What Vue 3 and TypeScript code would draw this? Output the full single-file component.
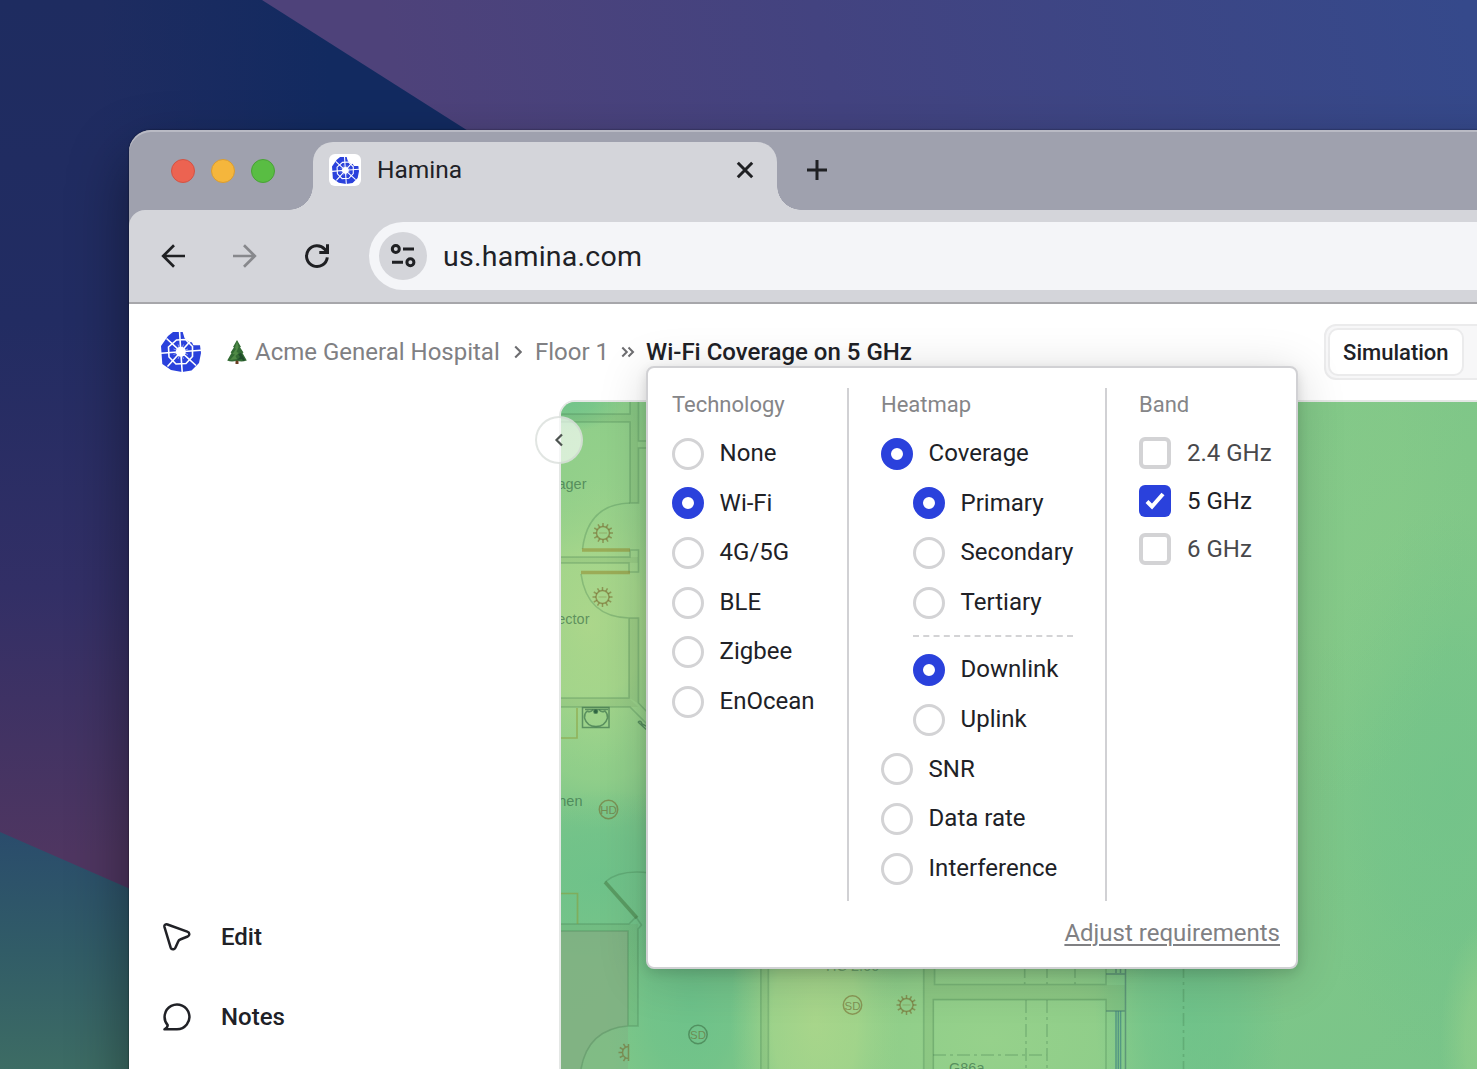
<script setup lang="ts">
interface Option {
  label: string
  checked?: boolean
  nested?: boolean
  divider?: boolean
}

const technologies: Option[] = [
  { label: 'None' },
  { label: 'Wi-Fi', checked: true },
  { label: '4G/5G' },
  { label: 'BLE' },
  { label: 'Zigbee' },
  { label: 'EnOcean' },
]

const heatmaps: Option[] = [
  { label: 'Coverage', checked: true },
  { label: 'Primary', checked: true, nested: true },
  { label: 'Secondary', nested: true },
  { label: 'Tertiary', nested: true },
  { label: '', divider: true },
  { label: 'Downlink', checked: true, nested: true },
  { label: 'Uplink', nested: true },
  { label: 'SNR' },
  { label: 'Data rate' },
  { label: 'Interference' },
]

const bands: Option[] = [
  { label: '2.4 GHz' },
  { label: '5 GHz', checked: true },
  { label: '6 GHz' },
]

// Spiky ring used for the detector symbols on the floor plan
function burst(cx: number, cy: number, from = 0, to = 12): string {
  let d = ''
  for (let i = from; i < to; i++) {
    const a = (i * Math.PI) / 6
    const c = Math.cos(a)
    const s = Math.sin(a)
    d += `M${(cx + 6.5 * c).toFixed(1)} ${(cy + 6.5 * s).toFixed(1)}L${(cx + 10 * c).toFixed(1)} ${(cy + 10 * s).toFixed(1)}`
  }
  return d
}
</script>

<template>
  <div class="desktop">
    <svg class="wallpaper" viewBox="0 0 1477 1069" preserveAspectRatio="none">
      <defs>
        <linearGradient id="navy" x1="0" y1="0" x2="0" y2="1">
          <stop offset="0" stop-color="#1e2c60" />
          <stop offset=".3" stop-color="#222c62" />
          <stop offset=".55" stop-color="#322f66" />
          <stop offset=".8" stop-color="#4f3661" />
        </linearGradient>
        <linearGradient id="deep" gradientUnits="userSpaceOnUse" x1="100" y1="0" x2="330" y2="0">
          <stop offset="0" stop-color="#122a60" stop-opacity="0" />
          <stop offset="1" stop-color="#122a60" />
        </linearGradient>
        <linearGradient id="violet" gradientUnits="userSpaceOnUse" x1="420" y1="180" x2="1450" y2="-60">
          <stop offset="0" stop-color="#4e427a" />
          <stop offset=".4" stop-color="#434380" />
          <stop offset="1" stop-color="#35498b" />
        </linearGradient>
        <linearGradient id="teal" x1="0" y1="0" x2="0" y2="1">
          <stop offset="0" stop-color="#2a4c6c" />
          <stop offset=".5" stop-color="#315c67" />
          <stop offset="1" stop-color="#3d6c64" />
        </linearGradient>
      </defs>
      <rect width="1477" height="1069" fill="url(#navy)" />
      <rect x="100" width="500" height="180" fill="url(#deep)" />
      <path d="M262 0H1477V200H577Z" fill="url(#violet)" />
      <path d="M0 832L160 902V1069H0Z" fill="url(#teal)" />
    </svg>

    <svg class="defs" width="0" height="0">
      <symbol id="logo" viewBox="0 0 40 40">
        <path fill="#2a41dc" d="M12 0H21.7L23.5 6L26 8.5L31 10.5L32.3 13.3H39L40 21L38 31L30.5 38.5L21 40L10 38L1.3 32L0 14L7 4Z" />
        <g fill="none" stroke="#fff" stroke-width="1.6">
          <path d="M15.500 8L24.500 7.500L31.500 14.500L31.500 24.500L25 31.500L15 32L8 25L7.500 15Z" />
          <path d="M19.800 19.700L18.600 0M19.800 19.700L5.500 6.500M19.800 19.700L0 21.300M19.800 19.700L6.500 34.500M19.800 19.700L21.200 40M19.800 19.700L35 33.500M19.800 19.700L40 18.200M19.800 19.700L30 8.500" />
        </g>
        <circle cx="19.800" cy="19.700" r="5" fill="#fff" />
        <path fill="none" stroke="#fff" stroke-width="1" d="M17 12.500L22.500 27M22.500 12.500L17 27M12.500 17L27 22.500M12.500 22.500L27 17" opacity=".5" />
        <path fill="#fff" d="M22.500 0L27 0L40 12H33L31 9.500L26.500 8.300L24 5.500Z" />
      </symbol>
    </svg>

    <div class="window">
      <div class="tabbar">
        <div class="lights">
          <i class="light red"></i><i class="light yellow"></i><i class="light green"></i>
        </div>
        <div class="tab">
          <div class="favicon"><svg width="27" height="27"><use href="#logo" /></svg></div>
          <span class="tab-title">Hamina</span>
          <svg class="close" width="20" height="20" viewBox="0 0 20 20"><path d="M2.800 2.800L17.200 17.200M17.200 2.800L2.800 17.200" stroke="#1f2023" stroke-width="3" /></svg>
        </div>
        <svg class="plus" width="20" height="20" viewBox="0 0 20 20"><path d="M10 0V20M0 10H20" stroke="#1f2023" stroke-width="3" /></svg>
      </div>

      <div class="toolbar">
        <svg class="nav back" width="26" height="26" viewBox="0 0 26 26"><path d="M25 13H3.500M14 2.200L3.200 13L14 23.800" fill="none" stroke="#1f2023" stroke-width="2.700" /></svg>
        <svg class="nav forward" width="26" height="26" viewBox="0 0 26 26"><path d="M1 13H22.500M12 2.200L22.800 13L12 23.800" fill="none" stroke="#87888c" stroke-width="2.700" /></svg>
        <svg class="nav reload" width="26" height="26" viewBox="0 0 26 26"><path d="M23.300 14.300A10.400 10.400 0 1 1 20.800 6.300L23 9" fill="none" stroke="#1f2023" stroke-width="3" /><path d="M22 1.200H25V11H15.300V8H22Z" fill="#1f2023" /></svg>
        <div class="address">
          <div class="site">
            <svg width="28" height="28" viewBox="0 0 28 28"><g fill="none" stroke="#1f2023" stroke-width="3"><circle cx="6.800" cy="7" r="3.500" /><circle cx="21.400" cy="20.300" r="3.500" /><path d="M14 7H25M3 20.300H14" /></g></svg>
          </div>
          <span class="url">us.hamina.com</span>
        </div>
      </div>

      <div class="page">
        <header class="header">
          <svg class="brand" width="40" height="40"><use href="#logo" /></svg>
          <nav class="crumbs">
            <svg class="tree" width="20" height="24" viewBox="0 0 20 24">
              <path d="M8.500 19H11.500V24H8.500Z" fill="#6b3d22" />
              <path d="M10 0L14 7L13 7.200L16.500 12.500L15.500 13L19.800 20.500Q14 22.500 10 20.500Q5 22.500 .2 20.500L4.500 13L3.600 12.500L7 7.200L6 7Z" fill="#336b34" />
              <path d="M10 1L8 8L9 9L5.500 14L8 14.500L3 20L10 19L8.500 16L12 13L9.500 12L11.500 7Z" fill="#4f8a46" />
              <path d="M11 14L13 17L10 20L15 19L16 21L18 20L14 13Z" fill="#204c2b" />
            </svg>
            <span class="crumb hospital">Acme General Hospital</span>
            <svg class="sep" width="8" height="14" viewBox="0 0 8 14"><path d="M1.200 1.500L6.700 7L1.200 12.500" fill="none" stroke="#6d6d70" stroke-width="2.100" /></svg>
            <span class="crumb floor">Floor 1</span>
            <svg class="dsep" width="14" height="12" viewBox="0 0 14 12"><path d="M1.300 1.500L5.800 6L1.300 10.500M7.500 1.500L12 6L7.500 10.500" fill="none" stroke="#6d6d70" stroke-width="2" /></svg>
            <span class="current">Wi-Fi Coverage on 5 GHz</span>
          </nav>
          <div class="segmented"><div class="segment">Simulation</div></div>
        </header>

        <div class="body">
          <aside class="sidebar">
            <div class="tool">
              <svg width="28" height="28" viewBox="0 0 28 28"><path d="M1.500 4.100L7.700 24.700Q8.500 26.800 10.700 26.200Q12 25.900 12.500 24.600L15.200 18.400Q15.800 17 17.200 16.500L24.600 13.500Q26.400 12.700 26.300 11Q26.200 9.300 24.200 8.600L4.500 1.500Q2.500 .9 1.700 2.200Q1.200 3 1.500 4.100Z" fill="none" stroke="#202126" stroke-width="2.500" stroke-linejoin="round" /></svg>
              <span>Edit</span>
            </div>
            <div class="tool">
              <svg width="28" height="28" viewBox="0 0 28 28"><path d="M1.500 26.300H14A12.400 12.400 0 1 0 4.700 22.100Q4.700 24.600 1.500 26.300Z" fill="none" stroke="#202126" stroke-width="2.500" stroke-linejoin="round" /></svg>
              <span>Notes</span>
            </div>
          </aside>

          <main class="map">
            <svg class="plan" width="916" height="667" viewBox="561 402 916 667">
              <defs>
                <linearGradient id="field" x1="0" y1="0" x2="1" y2="1">
                  <stop offset="0" stop-color="#84ca88" />
                  <stop offset=".3" stop-color="#7cc588" />
                  <stop offset=".65" stop-color="#82c888" />
                  <stop offset="1" stop-color="#79c489" />
                </linearGradient>
                <radialGradient id="lime"><stop offset="0" stop-color="#b0d88b" /><stop offset=".5" stop-color="#aad78b" stop-opacity=".85" /><stop offset="1" stop-color="#9bd28b" stop-opacity="0" /></radialGradient>
                <radialGradient id="mint"><stop offset="0" stop-color="#6bc18a" /><stop offset=".5" stop-color="#6bc18a" stop-opacity=".7" /><stop offset="1" stop-color="#6bc18a" stop-opacity="0" /></radialGradient>
                <radialGradient id="fresh"><stop offset="0" stop-color="#96d18b" /><stop offset=".5" stop-color="#94d08a" stop-opacity=".8" /><stop offset="1" stop-color="#90cf8a" stop-opacity="0" /></radialGradient>
              </defs>
              <rect x="561" y="402" width="916" height="667" fill="url(#field)" />
              <ellipse cx="605" cy="500" rx="120" ry="150" fill="url(#fresh)" />
              <ellipse cx="600" cy="730" rx="120" ry="100" fill="url(#fresh)" />
              <ellipse cx="565" cy="400" rx="60" ry="32" fill="url(#mint)" opacity=".8" />
              <ellipse cx="590" cy="625" rx="110" ry="145" fill="url(#lime)" opacity=".9" />
              <ellipse cx="600" cy="880" rx="150" ry="90" fill="url(#mint)" opacity=".8" />
              <ellipse cx="690" cy="1000" rx="85" ry="150" fill="url(#mint)" opacity=".9" />
              <ellipse cx="990" cy="1040" rx="230" ry="140" fill="url(#fresh)" />
              <ellipse cx="815" cy="1020" rx="85" ry="170" fill="url(#lime)" opacity=".8" />
              <ellipse cx="1190" cy="1010" rx="95" ry="180" fill="url(#mint)" opacity=".8" />
              <ellipse cx="1450" cy="790" rx="150" ry="280" fill="url(#mint)" opacity=".55" />
              <ellipse cx="1330" cy="480" rx="140" ry="320" fill="url(#fresh)" opacity=".25" />
              <ellipse cx="1490" cy="1040" rx="50" ry="120" fill="url(#fresh)" opacity=".7" />

              <path d="M561 931H628V1026Q590 1030 581 1069H561Z" fill="#82ac82" opacity=".75" />
              <path d="M628 1026V1069H581Q590 1030 628 1026Z" fill="#82ac82" opacity=".4" />
              <path d="M630 402H638V503H630ZM561 414H630V422H561ZM561 557H638V563H561ZM629 618H638V703L629 698ZM561 698H629L638 707H561ZM561 924H638V1026H628V931H561ZM761 969H768V1069H761ZM924 969H934V985H1125V1011H1106V1000H934V1069H924Z" fill="#668f55" opacity=".13" />

              <g fill="none" stroke="#3e7a4c" stroke-opacity=".3" stroke-width="1.600">
                <path d="M561 414H630V402M561 422H630V503H638.500V448H650M638.500 402V441H650" />
                <path d="M630 503Q588 504 582.500 549M561 557H630V550H638.500V572H629V563H561" />
                <path d="M581 574Q587 617 629 618V698H561M629 618H638.500V703L650 715M561 707H630L650 727" />
                <path d="M605 882Q620 869 650 873M561 924H629L636 917L641.500 925L638 929V1026H628V931H561M628 1026Q588 1029 581 1069" />
                <path d="M760.800 965V1069M768.400 965V1069M923.700 965V1069M934.600 965V984.500H1106V965M933.300 1069V999.600H1106V1069" />
                <path stroke-dasharray="13 4 3 4" d="M1024.700 965V984M1047 965V984M1075 965V984M1026 1000V1069M1047 1000V1069M933 1055H1047M1183.500 965V1069" />
              </g>
              <g fill="none" stroke="#8a9c38" stroke-opacity=".55" stroke-width="1.700">
                <path d="M561 738H577V708M561 893.500H577.500V924" />
                <path d="M605 882L637 918" stroke="#477c43" stroke-width="3.600" />
                <path d="M582 550H630M581 572.500H630" stroke="#928b2e" stroke-width="3.600" />
              </g>
              <g fill="none" stroke="#3a7e80" stroke-opacity=".65" stroke-width="1.500">
                <path d="M1106 974H1125.500M1106 1011H1125.500V965M1125.500 1011V1069M1116 965V973M1120.500 965V973" stroke="#4c7d6f" />
                <path d="M1116 1011V1069M1118.300 1011V1069M1120.600 1011V1069" />
              </g>
              <g fill="none" stroke="#2f6542" stroke-opacity=".6" stroke-width="1.500">
                <path d="M582.500 707.500H609V727.500H582.500ZM585 709.500H608" />
                <path d="M587 711Q584 714 584.500 718Q587 726.500 596 726.500Q605 726.500 607.500 718Q608 714 605 711Q601 713 599 709.500M593 709.500Q591 713 587 711" /><circle cx="595.700" cy="711.500" r="1.800" fill="#2f6542" />
                <path d="M638 722L648 731M638 722Q641 720 642 724L648 727" />
              </g>
              <g fill="none" stroke="#755f24" stroke-opacity=".52" stroke-width="1.500">
                <circle cx="603" cy="533" r="6.500" /><path :d="burst(603, 533)" /><path d="M599 533H607" opacity=".4" />
                <circle cx="602.500" cy="597" r="6.500" /><path :d="burst(602.5, 597)" /><path d="M598.500 597H606.500" opacity=".4" />
                <circle cx="906.500" cy="1005" r="6.500" /><path :d="burst(906.5, 1005)" /><path d="M902.500 1005H910.500" opacity=".4" />
                <path d="M628.500 1044V1061M628.500 1046.500A6 6 0 0 0 628.500 1058.500" /><path :d="burst(628.5, 1052.5, 4, 9)" />
                <circle cx="608.500" cy="809.500" r="9.200" />
                <circle cx="852.500" cy="1005" r="9.200" />
                <circle cx="698" cy="1034.500" r="9.200" stroke="#35633a" />
              </g>
              <g class="plan-text">
                <text x="586.500" y="489" text-anchor="end">ager</text>
                <text x="589.500" y="623.500" text-anchor="end">ector</text>
                <text x="582.500" y="806" text-anchor="end">hen</text>
                <text x="949" y="1073">G86a</text>
                <text x="826" y="971" opacity=".7">HC 2.60</text>
                <text class="tag" x="608.500" y="814" text-anchor="middle">HD</text>
                <text class="tag" x="852.500" y="1009.500" text-anchor="middle">SD</text>
                <text class="tag" x="698" y="1039" text-anchor="middle">SD</text>
              </g>
            </svg>
            <button class="collapse" aria-label="Collapse">
              <svg width="10" height="14" viewBox="0 0 10 14"><path d="M8 1.500L2.500 7L8 12.500" fill="none" stroke="#4d5450" stroke-width="2.200" /></svg>
            </button>
          </main>
        </div>

        <section class="popover">
          <div class="columns">
            <div class="column technology">
              <h3>Technology</h3>
              <label v-for="o in technologies" :key="o.label" class="option">
                <i class="radio" :class="{ on: o.checked }"></i><span>{{ o.label }}</span>
              </label>
            </div>
            <div class="column heatmap">
              <h3>Heatmap</h3>
              <template v-for="o in heatmaps" :key="o.label">
                <svg v-if="o.divider" class="rule" width="160" height="2"><path d="M0 1H160" stroke="#d3d3d5" stroke-width="2" stroke-dasharray="6 4.270" /></svg>
                <label v-else class="option" :class="{ nested: o.nested }">
                  <i class="radio" :class="{ on: o.checked }"></i><span>{{ o.label }}</span>
                </label>
              </template>
            </div>
            <div class="column band">
              <h3>Band</h3>
              <label v-for="o in bands" :key="o.label" class="check-row" :class="{ active: o.checked }">
                <i class="check" :class="{ on: o.checked }">
                  <svg v-if="o.checked" width="20" height="20" viewBox="0 0 20 20"><path d="M2 10.500L7 15.500L18 3" fill="none" stroke="#fff" stroke-width="4" /></svg>
                </i><span>{{ o.label }}</span>
              </label>
            </div>
          </div>
          <a class="adjust">Adjust requirements</a>
        </section>
      </div>
    </div>
  </div>
</template>

<style>
body {
  overflow: hidden;
}
</style>

<style scoped>
.desktop {
  position: relative;
  box-sizing: border-box;
  width: 1477px;
  height: 1069px;
  padding: 130px 0 0 129px;
  overflow: hidden;
  font-family: Roboto, "Liberation Sans", sans-serif;
  font-size: 24px;
  color: #202126;
}
.desktop *, .desktop *::before, .desktop *::after { box-sizing: border-box; }
.desktop svg { display: block; flex: none; }
.wallpaper { position: absolute; inset: 0; width: 100%; height: 100%; }
.desktop .defs { position: absolute; }
.window {
  position: relative;
  width: 1500px;
  height: 1000px;
  border-radius: 22px 0 0 0;
  background: #9fa1ae;
  box-shadow: 0 0 2px rgba(0, 0, 0, .6), 0 26px 60px rgba(0, 0, 0, .42);
}
.tabbar {
  display: flex;
  height: 80px;
  padding-left: 42px;
  border-radius: 22px 0 0 0;
  box-shadow: inset 0 2px 0 #b9bac4;
}
.lights { display: flex; gap: 16px; margin-top: 29px; }
.light { width: 24px; height: 24px; border-radius: 50%; border: 1px solid; }
.red { background: #ec6351; border-color: #d25344; }
.yellow { background: #f5b63c; border-color: #d99c31; }
.green { background: #59bd43; border-color: #49a236; }
.tab {
  position: relative;
  display: flex;
  align-items: center;
  width: 464px;
  height: 68px;
  margin: 12px 0 0 38px;
  padding: 0 22px 12px 16px;
  border-radius: 20px 20px 0 0;
  background: #d4d5da;
}
.tab::before, .tab::after {
  content: "";
  position: absolute;
  bottom: 0;
  width: 24px;
  height: 24px;
}
.tab::before { right: 100%; background: radial-gradient(circle at 0 0, transparent 23.5px, #d4d5da 24px); }
.tab::after { left: 100%; background: radial-gradient(circle at 100% 0, transparent 23.5px, #d4d5da 24px); }
.favicon {
  display: flex;
  align-items: center;
  justify-content: center;
  width: 32px;
  height: 32px;
  border-radius: 6px;
  background: #fff;
}
.tab-title { flex: 1; margin: 0 0 2px 16px; font-size: 24.500px; }
.plus { margin: 30px 0 0 30px; }
.toolbar {
  display: flex;
  align-items: center;
  height: 94px;
  border-bottom: 2px solid #a7a7ab;
  border-radius: 16px 0 0 0;
  background: #d4d5da;
}
.back { margin-left: 31px; }
.forward { margin-left: 46px; }
.reload { margin-left: 46px; }
.address {
  display: flex;
  align-items: center;
  flex: 1;
  height: 68px;
  margin-left: 39px;
  padding-left: 10px;
  border-radius: 34px 0 0 34px;
  background: #f4f5f8;
}
.site {
  display: flex;
  align-items: center;
  justify-content: center;
  width: 48px;
  height: 48px;
  border-radius: 50%;
  background: #d4d5da;
}
.url { margin-left: 16px; font-size: 28.500px; letter-spacing: .250px; }
.page { position: relative; height: 826px; background: #fff; }
.header { display: flex; align-items: center; height: 96px; padding-left: 32px; }
.crumbs { display: flex; align-items: center; margin-left: 26px; white-space: nowrap; }
.crumb { color: #808083; }
.hospital { margin-left: 8px; width: 244px; }
.sep { margin-left: 15px; }
.floor { margin-left: 13px; width: 74px; }
.dsep { margin-left: 12px; }
.current { margin-left: 11px; font-weight: 500; }
.segmented {
  width: 300px;
  height: 56px;
  margin-left: 412px;
  padding: 3px;
  border: 2px solid #ebebec;
  border-radius: 12px;
  background: #f7f7f8;
}
.segment {
  width: 136px;
  height: 48px;
  margin: -1px 0 0 -1px;
  border: 2px solid #ebebec;
  border-radius: 10px;
  background: #fff;
  font-size: 22px;
  font-weight: 500;
  line-height: 45px;
  text-align: center;
}
.body { display: flex; height: 730px; }
.sidebar { display: flex; flex-direction: column; gap: 52px; width: 430px; padding: 523px 0 0 34px; }
.tool { display: flex; align-items: center; gap: 30px; height: 28px; font-weight: 500; }
.map {
  position: relative;
  flex: 1;
  border: 2px solid #e4e7e5;
  border-radius: 16px 0 0 0;
}
.plan { border-radius: 14px 0 0 0; overflow: hidden; }
.plan-text { font-family: "Liberation Sans", Arial, sans-serif; font-size: 14.500px; fill: #2f6440; fill-opacity: .62; }
.tag { font-size: 11.500px; fill: #6a6a30; }
.collapse {
  position: absolute;
  top: 14px;
  left: -26px;
  display: flex;
  align-items: center;
  justify-content: center;
  width: 48px;
  height: 48px;
  padding: 0;
  border: 2px solid rgba(205, 212, 207, .6);
  border-radius: 50%;
  background: rgba(255, 255, 255, .64);
}
.popover {
  position: absolute;
  top: 62px;
  left: 517px;
  display: flex;
  flex-direction: column;
  width: 652px;
  height: 603px;
  padding-top: 20px;
  border: 2px solid #d1d1d4;
  border-radius: 8px;
  background: #fff;
  box-shadow: 0 8px 48px rgba(0, 0, 0, .17), 0 4px 12px rgba(0, 0, 0, .12);
}
.columns { display: flex; height: 513px; }
.column { display: flex; flex-direction: column; gap: 16px; }
.technology { width: 201px; padding-left: 24px; border-right: 2px solid #d1d1d4; }
.heatmap { width: 258px; padding-left: 32px; border-right: 2px solid #d1d1d4; }
.band { padding-left: 32px; }
h3 { height: 32.400px; margin: 0; font-size: 22px; font-weight: 400; line-height: 33px; color: #858588; }
.option { display: flex; gap: 15.600px; height: 33.600px; line-height: 33px; }
.option span { padding-top: .6px; }
.nested { margin-left: 32px; }
.desktop .rule { margin-left: 32px; }
.radio {
  width: 32px;
  height: 32px;
  margin-top: 1.400px;
  border: 3px solid #d3d3d5;
  border-radius: 50%;
}
.radio.on { border: 10px solid #2a41dc; }
.check-row { display: flex; align-items: center; gap: 16px; height: 32px; margin-top: .300px; margin-bottom: -.300px; color: #48484b; }
.check-row.active { color: #202126; }
.check {
  display: flex;
  align-items: center;
  justify-content: center;
  width: 32px;
  height: 32px;
  border: 4px solid #d3d3d5;
  border-radius: 6px;
}
.check.on { border: 0; background: #2a41dc; }
.adjust {
  align-self: flex-end;
  margin: 17px 16px 0 0;
  color: #808083;
  line-height: 30px;
  text-decoration: underline;
  text-decoration-thickness: 2px;
  text-underline-offset: 3px;
}
</style>
